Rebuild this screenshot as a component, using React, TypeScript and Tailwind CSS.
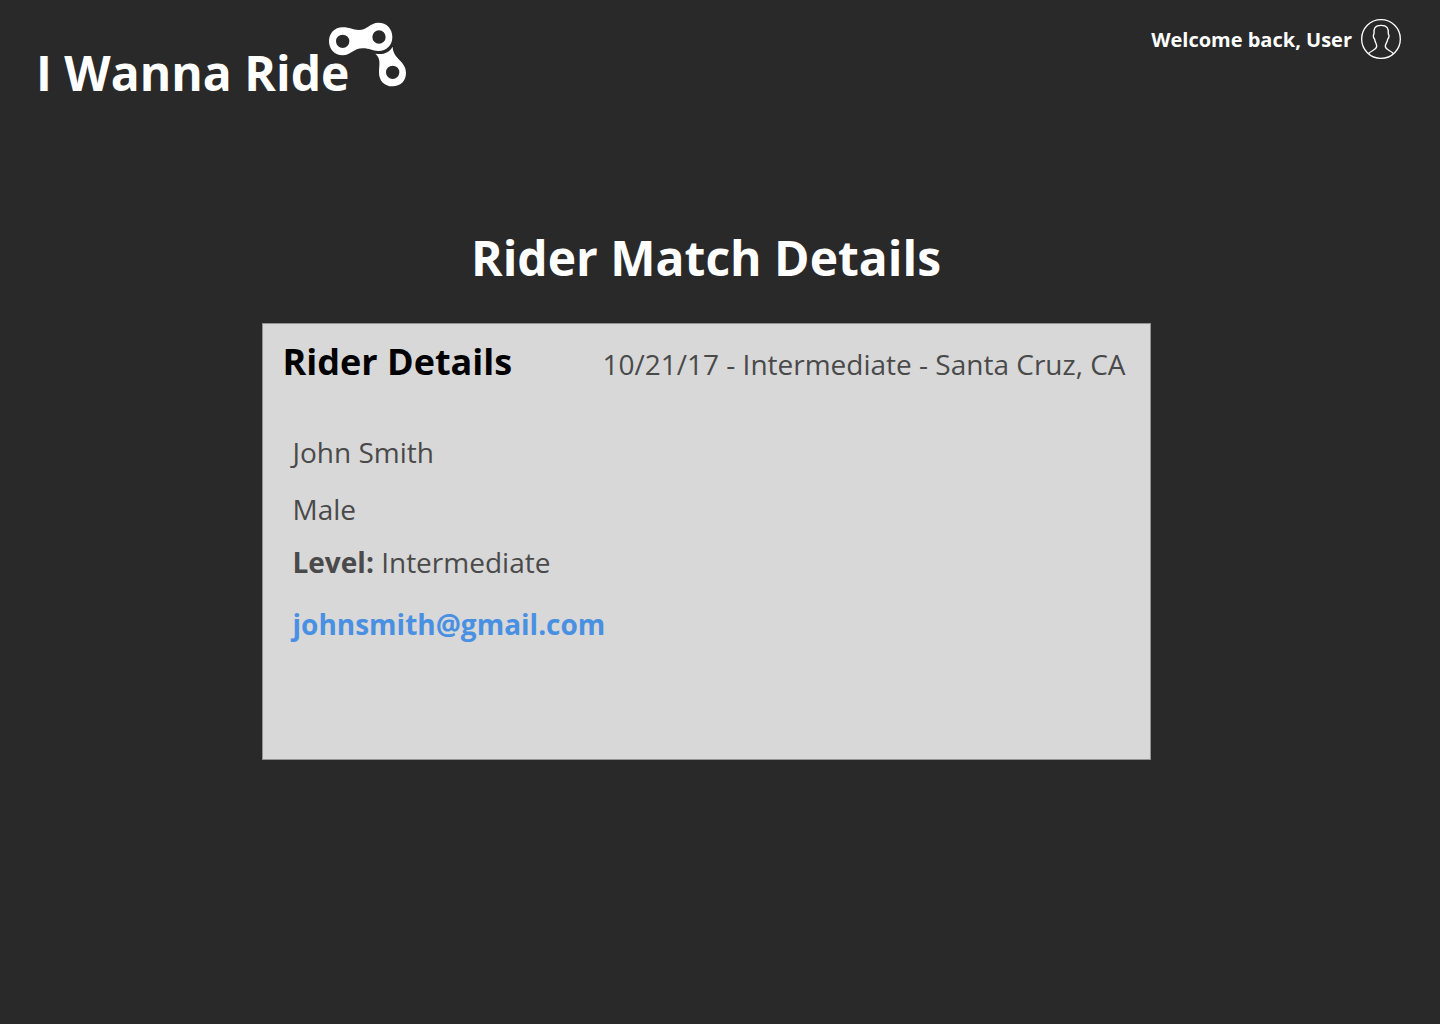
function ChainLogo() {
  return (
    <svg
      viewBox="27 20 234 195"
      className="-ml-5 h-[65px] w-[78px] shrink-0"
      fill="#ffffff"
      fillRule="evenodd"
      aria-hidden="true"
    >
      <path d="M68 36C43 36 27 55 27 78C27 102 44 120 68 120C92 120 101 99 128 99C150 99 156 107 175 107C200 107 217 90 217 65C217 40 200 22 175 22C151 22 141 44 117 44C96 44 91 36 68 36ZM68 58A20 20 0 1 1 68 98A20 20 0 1 1 68 58ZM177 45A20 20 0 1 1 177 85A20 20 0 1 1 177 45Z" />
      <path d="M218 94C219 132 258 135 258 173C258 197 241 213 218 213C192 213 177 195 177 172C177 147 184 131 166 115C191 119 207 112 218 94ZM218 151A20 20 0 1 0 218 191A20 20 0 1 0 218 151Z" />
    </svg>
  );
}

function Avatar() {
  return (
    <svg
      viewBox="0 0 120 120"
      className="size-10 shrink-0"
      fill="none"
      stroke="#ffffff"
      strokeWidth="4"
      aria-hidden="true"
    >
      <circle cx="60" cy="60" r="58" />
      <path d="M22 104C34 93 47 92 47 82C47 74 42 70 41 61C36 56 36 48 39 45C37 28 42 19 60 19C78 19 84 28 82 45C85 48 85 56 80 61C79 70 73 74 73 82C73 92 86 93 98 104" />
    </svg>
  );
}

export default function App() {
  return (
    <div className="min-h-screen bg-[#292929] font-['Open_Sans',sans-serif] text-white">
      <header className="flex items-start justify-between pr-[39px] pl-9">
        <a href="#" className="flex items-start pt-[22px]">
          <span className="pt-[19px] text-5xl leading-[64px] font-bold">I Wanna Ride</span>
          <ChainLogo />
        </a>
        <a href="#" className="flex items-center gap-[9px] pt-[19px]">
          <span className="pt-0.5 text-xl font-bold">Welcome back, User</span>
          <Avatar />
        </a>
      </header>

      <main className="mt-[121px] flex flex-col items-center pr-7">
        <h1 className="text-5xl leading-[64px] font-bold">Rider Match Details</h1>
        <section className="mt-[33px] w-full max-w-[889px] border border-[#929292] bg-[#d8d8d8] px-5 pt-[18px] pb-[115px] text-[28px] leading-10 text-[#4a4a4a]">
          <div className="flex items-baseline justify-between pr-1">
            <h2 className="text-4xl leading-10 font-bold text-black">Rider Details</h2>
            <p>10/21/17 - Intermediate - Santa Cruz, CA</p>
          </div>
          <div className="mt-12 flex flex-col items-start pl-2.5">
            <p>John Smith</p>
            <p className="mt-[17px]">Male</p>
            <p className="mt-[13px]">
              <strong className="font-bold">Level:</strong> Intermediate
            </p>
            <a
              href="mailto:johnsmith@gmail.com"
              className="mt-[22px] font-bold text-[#4a90e2]"
            >
              johnsmith@gmail.com
            </a>
          </div>
        </section>
      </main>
    </div>
  );
}
